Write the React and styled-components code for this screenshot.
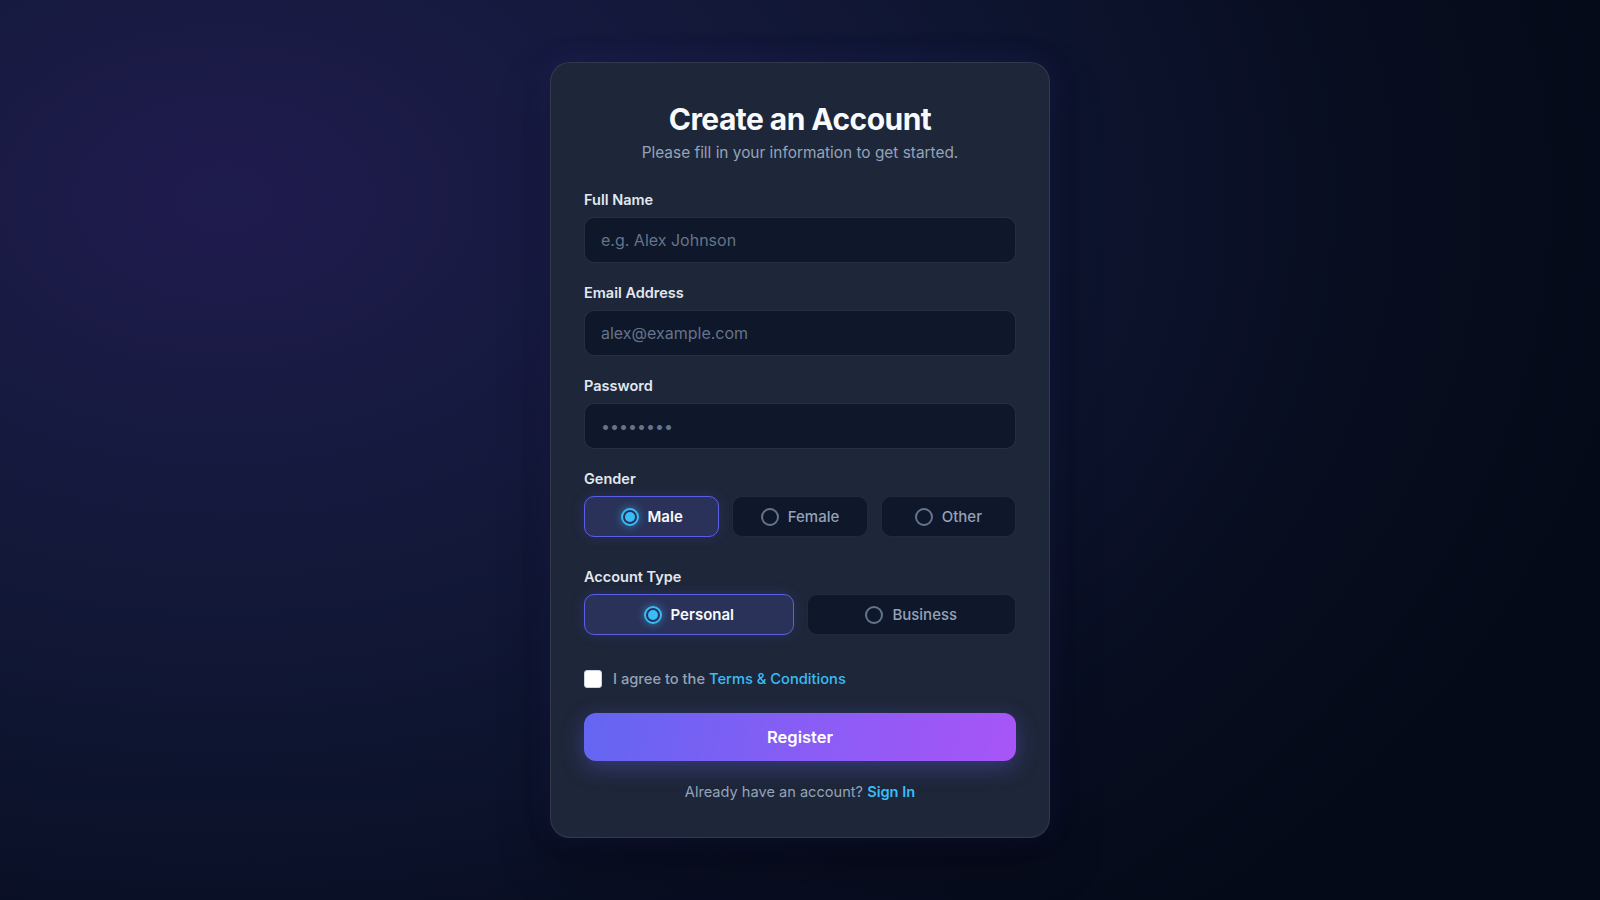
import React from 'react';
import styled, { createGlobalStyle } from 'styled-components';

const GlobalStyle = createGlobalStyle`
  * { box-sizing: border-box; }
  html, body { margin: 0; padding: 0; height: 100%; }
  body { font-family: Inter, "Noto Sans", sans-serif; -webkit-font-smoothing: antialiased; }
  #root { height: 100%; }
`;

const Page = styled.div`
  min-height: 100vh;
  display: flex;
  align-items: center;
  justify-content: center;
  background: radial-gradient(ellipse 90% 110% at 14% 22%, #1f1b4e 0%, #171a40 25%, #0e1530 55%, #080d20 80%, #050a18 100%);
`;

const Card = styled.form`
  width: 500px;
  padding: 38px 33px 34px;
  background: #1e2639;
  border: 1px solid rgba(255, 255, 255, 0.09);
  border-radius: 20px;
  box-shadow: 0 0 30px rgba(79, 70, 229, 0.12), 0 25px 50px rgba(0, 0, 0, 0.35);
  display: flex;
  flex-direction: column;
`;

const Title = styled.h1`
  margin: 0 0 5px;
  text-align: center;
  font-size: 30px;
  line-height: 36px;
  font-weight: 700;
  color: #f8fafc;
  letter-spacing: -0.55px;
`;

const Subtitle = styled.p`
  margin: 0 0 26px;
  text-align: center;
  font-size: 15.4px;
  line-height: 22px;
  color: #94a3b8;
`;

const Group = styled.div`
  display: flex;
  flex-direction: column;
  gap: 7px;
  margin-bottom: ${p => (p.$wide ? '30px' : '20px')};
`;

const Label = styled.label`
  font-size: 14.5px;
  line-height: 20px;
  font-weight: 600;
  color: #e2e8f0;
`;

const Input = styled.input`
  height: 46px;
  width: 100%;
  padding: 0 16px;
  background: #0f172a;
  border: 1px solid rgba(255, 255, 255, 0.1);
  border-radius: 10px;
  font-family: inherit;
  font-size: 16px;
  color: #e2e8f0;
  outline: none;
  &::placeholder { color: #64748b; }
`;

const Options = styled.div`
  display: grid;
  grid-template-columns: repeat(${p => p.$cols}, 1fr);
  gap: 13px;
`;

const Option = styled.div`
  height: 41px;
  display: flex;
  align-items: center;
  justify-content: center;
  gap: 9px;
  border-radius: 10px;
  border: 1px solid ${p => (p.$active ? '#5b5ee6' : 'rgba(255,255,255,0.08)')};
  background: ${p => (p.$active ? '#2a3259' : '#0f172a')};
  box-shadow: ${p => (p.$active ? '0 0 14px rgba(99,102,241,0.18)' : 'none')};
  font-size: 15px;
  font-weight: ${p => (p.$active ? 600 : 500)};
  color: ${p => (p.$active ? '#f8fafc' : '#94a3b8')};
`;

const Radio = styled.span`
  width: 18px;
  height: 18px;
  flex: none;
  border-radius: 50%;
  border: 2px solid ${p => (p.$active ? '#38bdf8' : '#64748b')};
  display: flex;
  align-items: center;
  justify-content: center;
  box-shadow: ${p => (p.$active ? '0 0 8px rgba(56,189,248,0.55)' : 'none')};
  &::after {
    content: '';
    width: 10px;
    height: 10px;
    border-radius: 50%;
    background: ${p => (p.$active ? '#38bdf8' : 'transparent')};
  }
`;

const CheckRow = styled.label`
  display: flex;
  align-items: center;
  gap: 11px;
  margin-top: 4px;
  margin-bottom: 24px;
  font-size: 14.7px;
  line-height: 20px;
  font-weight: 500;
  color: #94a3b8;
`;

const Box = styled.span`
  width: 18px;
  height: 18px;
  flex: none;
  border-radius: 3px;
  background: #ffffff;
  border: 1px solid #cbd5e1;
`;

const Link = styled.a`
  color: #38bdf8;
  font-weight: ${p => (p.$bold ? 600 : 500)};
  text-decoration: none;
`;

const Button = styled.button`
  height: 48px;
  width: 100%;
  border: none;
  border-radius: 12px;
  background: linear-gradient(100deg, #6366f1 0%, #8b5cf6 55%, #a855f7 100%);
  color: #ffffff;
  font-family: inherit;
  font-size: 16.5px;
  font-weight: 600;
  box-shadow: 0 6px 22px rgba(99, 102, 241, 0.35);
  margin-bottom: 20px;
`;

const Footer = styled.p`
  margin: 0;
  text-align: center;
  font-size: 14.6px;
  line-height: 22px;
  color: #94a3b8;
`;

export default function App() {
  return (
    <>
      <GlobalStyle />
      <Page>
        <Card onSubmit={e => e.preventDefault()}>
          <Title>Create an Account</Title>
          <Subtitle>Please fill in your information to get started.</Subtitle>

          <Group>
            <Label>Full Name</Label>
            <Input placeholder="e.g. Alex Johnson" />
          </Group>
          <Group>
            <Label>Email Address</Label>
            <Input placeholder="alex@example.com" />
          </Group>
          <Group>
            <Label>Password</Label>
            <Input type="password" placeholder="••••••••" />
          </Group>

          <Group $wide>
            <Label>Gender</Label>
            <Options $cols={3}>
              <Option $active><Radio $active />Male</Option>
              <Option><Radio />Female</Option>
              <Option><Radio />Other</Option>
            </Options>
          </Group>

          <Group $wide>
            <Label>Account Type</Label>
            <Options $cols={2}>
              <Option $active><Radio $active />Personal</Option>
              <Option><Radio />Business</Option>
            </Options>
          </Group>

          <CheckRow>
            <Box />
            <span>I agree to the <Link href="#">Terms &amp; Conditions</Link></span>
          </CheckRow>

          <Button type="submit">Register</Button>

          <Footer>
            Already have an account? <Link href="#" $bold>Sign In</Link>
          </Footer>
        </Card>
      </Page>
    </>
  );
}
